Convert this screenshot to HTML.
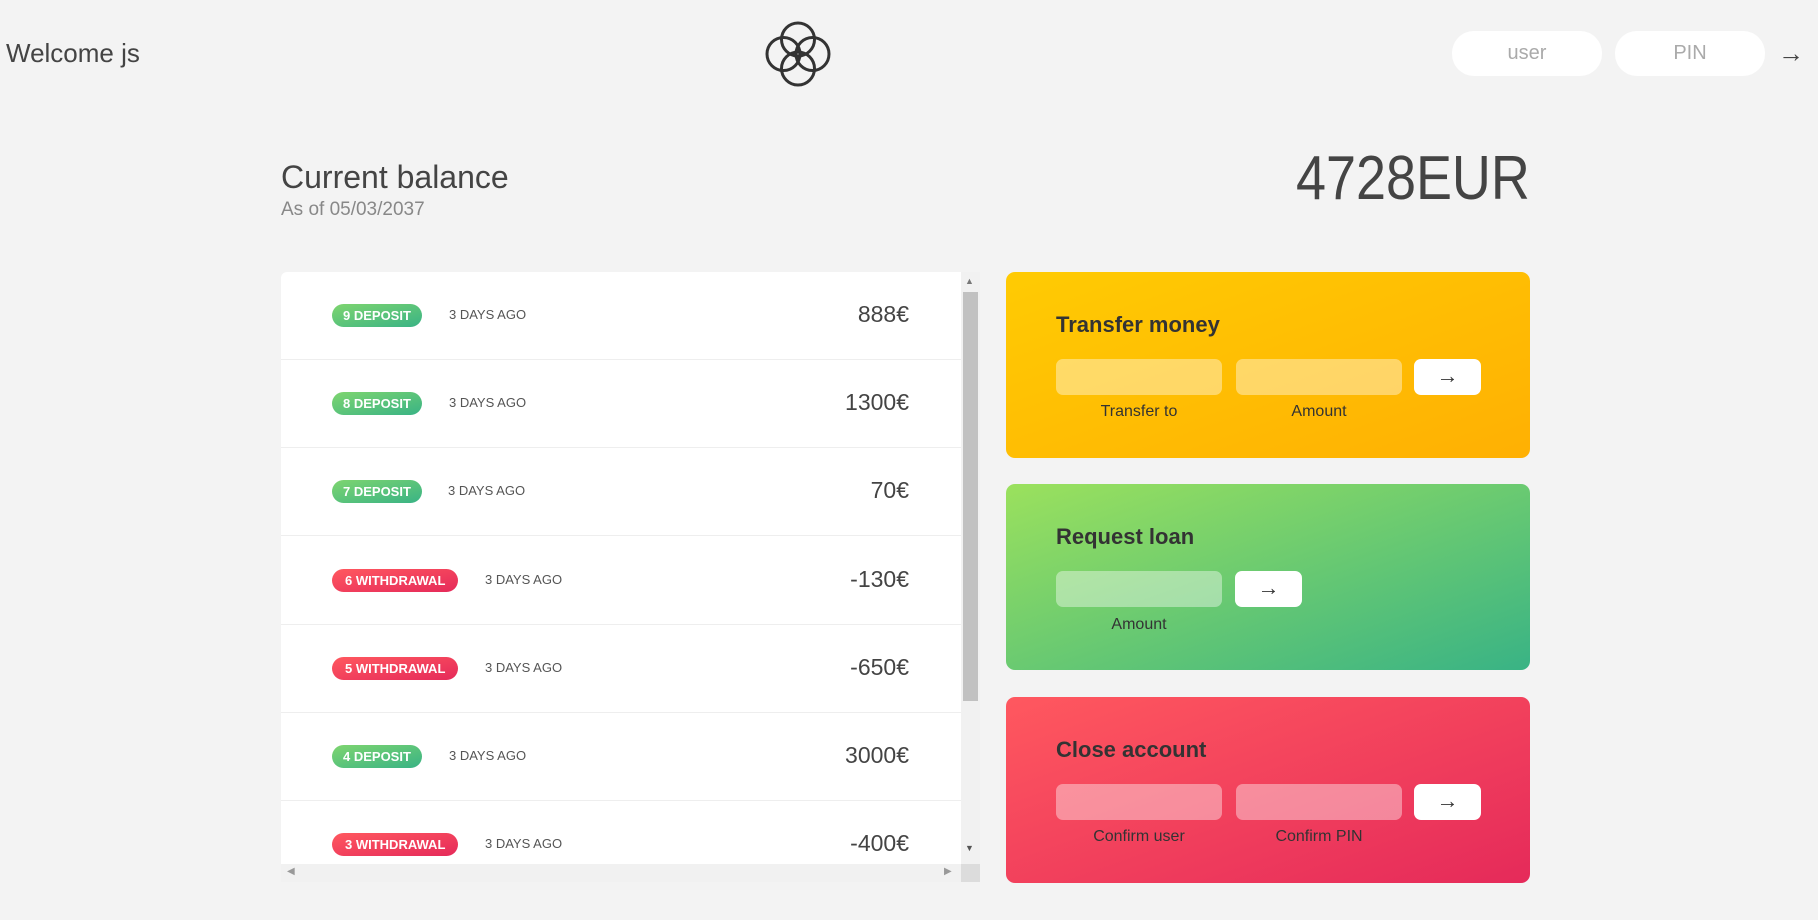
<!DOCTYPE html>
<html><head><meta charset="utf-8"><style>
*{margin:0;padding:0;box-sizing:border-box}
body{width:1818px;height:920px;background:#f3f3f3;font-family:"Liberation Sans",sans-serif;color:#444;position:relative;overflow:hidden}
.a{position:absolute}
.inp{position:absolute;background:#fff;border-radius:22px;height:45px;width:150px;color:#aaa;font-size:20px;text-align:center;line-height:45px}
.panel{position:absolute;left:281px;top:272px;width:680px;height:592px;background:#fff;border-radius:6px 0 0 0;overflow:hidden}
.row{position:absolute;left:0;width:680px;height:88px;border-bottom:1px solid #eee}
.badge{position:absolute;left:51px;top:32px;height:23px;border-radius:12px;color:#fff;font-weight:bold;font-size:13px;line-height:23px;padding:0 11px;white-space:nowrap}
.dep{background:linear-gradient(to bottom right,#7ed56f,#39b385)}
.wd{background:linear-gradient(to bottom right,#ff585f,#e52a5a);padding:0 13px}
.date{position:absolute;top:35px;font-size:13px;color:#555;text-transform:uppercase}
.amt{position:absolute;right:52px;top:29px;font-size:23px;color:#444}
.card{position:absolute;left:1006px;width:524px;border-radius:9px}
.card h2{position:absolute;left:50px;top:40px;font-size:22px;font-weight:bold;color:#333}
.fi{position:absolute;height:36px;border-radius:7px;background:rgba(255,255,255,.4);width:166px}
.btn{position:absolute;height:36px;width:67px;border-radius:7px;background:#fff;text-align:center;font-size:22px;line-height:34px;color:#333}
.lbl{position:absolute;width:166px;text-align:center;font-size:16px;color:#333}
</style></head><body>
<div class="a" style="left:6px;top:38px;font-size:26px;color:#444">Welcome js</div>
<svg class="a" style="left:764px;top:20px" width="68" height="68" viewBox="0 0 68 68" fill="none" stroke="#333" stroke-width="3">
<circle cx="34" cy="19.5" r="16.5"/><circle cx="34" cy="48.5" r="16.5"/><circle cx="19.5" cy="34" r="16.5"/><circle cx="48.5" cy="34" r="16.5"/></svg>
<div class="inp" style="left:1452px;top:31px">user</div>
<div class="inp" style="left:1615px;top:31px">PIN</div>
<div class="a" style="left:1778px;top:38px;font-size:26px;color:#444">→</div>

<div class="a" style="left:281px;top:159px;font-size:32px;color:#444">Current balance</div>
<div class="a" style="left:281px;top:199px;font-size:19px;color:#888">As of 05/03/2037</div>
<div class="a" style="right:288px;top:143px;font-size:62px;color:#444;transform:scaleX(0.87);transform-origin:right center">4728EUR</div>

<div class="panel">
<div class="row" style="top:0"><span class="badge dep">9 DEPOSIT</span><span class="date" style="left:168px">3 days ago</span><span class="amt">888€</span></div>
<div class="row" style="top:88px"><span class="badge dep">8 DEPOSIT</span><span class="date" style="left:168px">3 days ago</span><span class="amt">1300€</span></div>
<div class="row" style="top:176px"><span class="badge dep">7 DEPOSIT</span><span class="date" style="left:167px">3 days ago</span><span class="amt">70€</span></div>
<div class="row" style="top:265px"><span class="badge wd">6 WITHDRAWAL</span><span class="date" style="left:204px">3 days ago</span><span class="amt">-130€</span></div>
<div class="row" style="top:353px"><span class="badge wd">5 WITHDRAWAL</span><span class="date" style="left:204px">3 days ago</span><span class="amt">-650€</span></div>
<div class="row" style="top:441px"><span class="badge dep">4 DEPOSIT</span><span class="date" style="left:168px">3 days ago</span><span class="amt">3000€</span></div>
<div class="row" style="top:529px"><span class="badge wd">3 WITHDRAWAL</span><span class="date" style="left:204px">3 days ago</span><span class="amt">-400€</span></div>
</div>
<div class="a" style="left:281px;top:864px;width:699px;height:18px;background:#f1f1f1"></div>
<div class="a" style="left:961px;top:272px;width:19px;height:592px;background:#f1f1f1"></div>
<div class="a" style="left:963px;top:292px;width:15px;height:409px;background:#c1c1c1"></div>
<div class="a" style="left:965px;top:276px;font-size:9px;color:#777">▲</div>
<div class="a" style="left:965px;top:843px;font-size:9px;color:#555">▼</div>
<div class="a" style="left:287px;top:866px;font-size:10px;color:#999">◀</div>
<div class="a" style="left:944px;top:866px;font-size:10px;color:#999">▶</div>
<div class="a" style="left:961px;top:864px;width:19px;height:18px;background:#dcdcdc"></div>

<div class="card" style="top:272px;height:186px;background:linear-gradient(to top left,#ffb003,#ffcb03)">
<h2>Transfer money</h2>
<div class="fi" style="left:50px;top:87px"></div><div class="fi" style="left:230px;top:87px"></div>
<div class="btn" style="left:408px;top:87px">→</div>
<div class="lbl" style="left:50px;top:131px">Transfer to</div><div class="lbl" style="left:230px;top:131px">Amount</div>
</div>
<div class="card" style="top:484px;height:186px;background:linear-gradient(to bottom right,#9be15d,#39b385)">
<h2>Request loan</h2>
<div class="fi" style="left:50px;top:87px"></div>
<div class="btn" style="left:229px;top:87px">→</div>
<div class="lbl" style="left:50px;top:132px">Amount</div>
</div>
<div class="card" style="top:697px;height:186px;background:linear-gradient(to bottom right,#ff585f,#e52a5a)">
<h2>Close account</h2>
<div class="fi" style="left:50px;top:87px"></div><div class="fi" style="left:230px;top:87px"></div>
<div class="btn" style="left:408px;top:87px">→</div>
<div class="lbl" style="left:50px;top:131px">Confirm user</div><div class="lbl" style="left:230px;top:131px">Confirm PIN</div>
</div>
</body></html>
